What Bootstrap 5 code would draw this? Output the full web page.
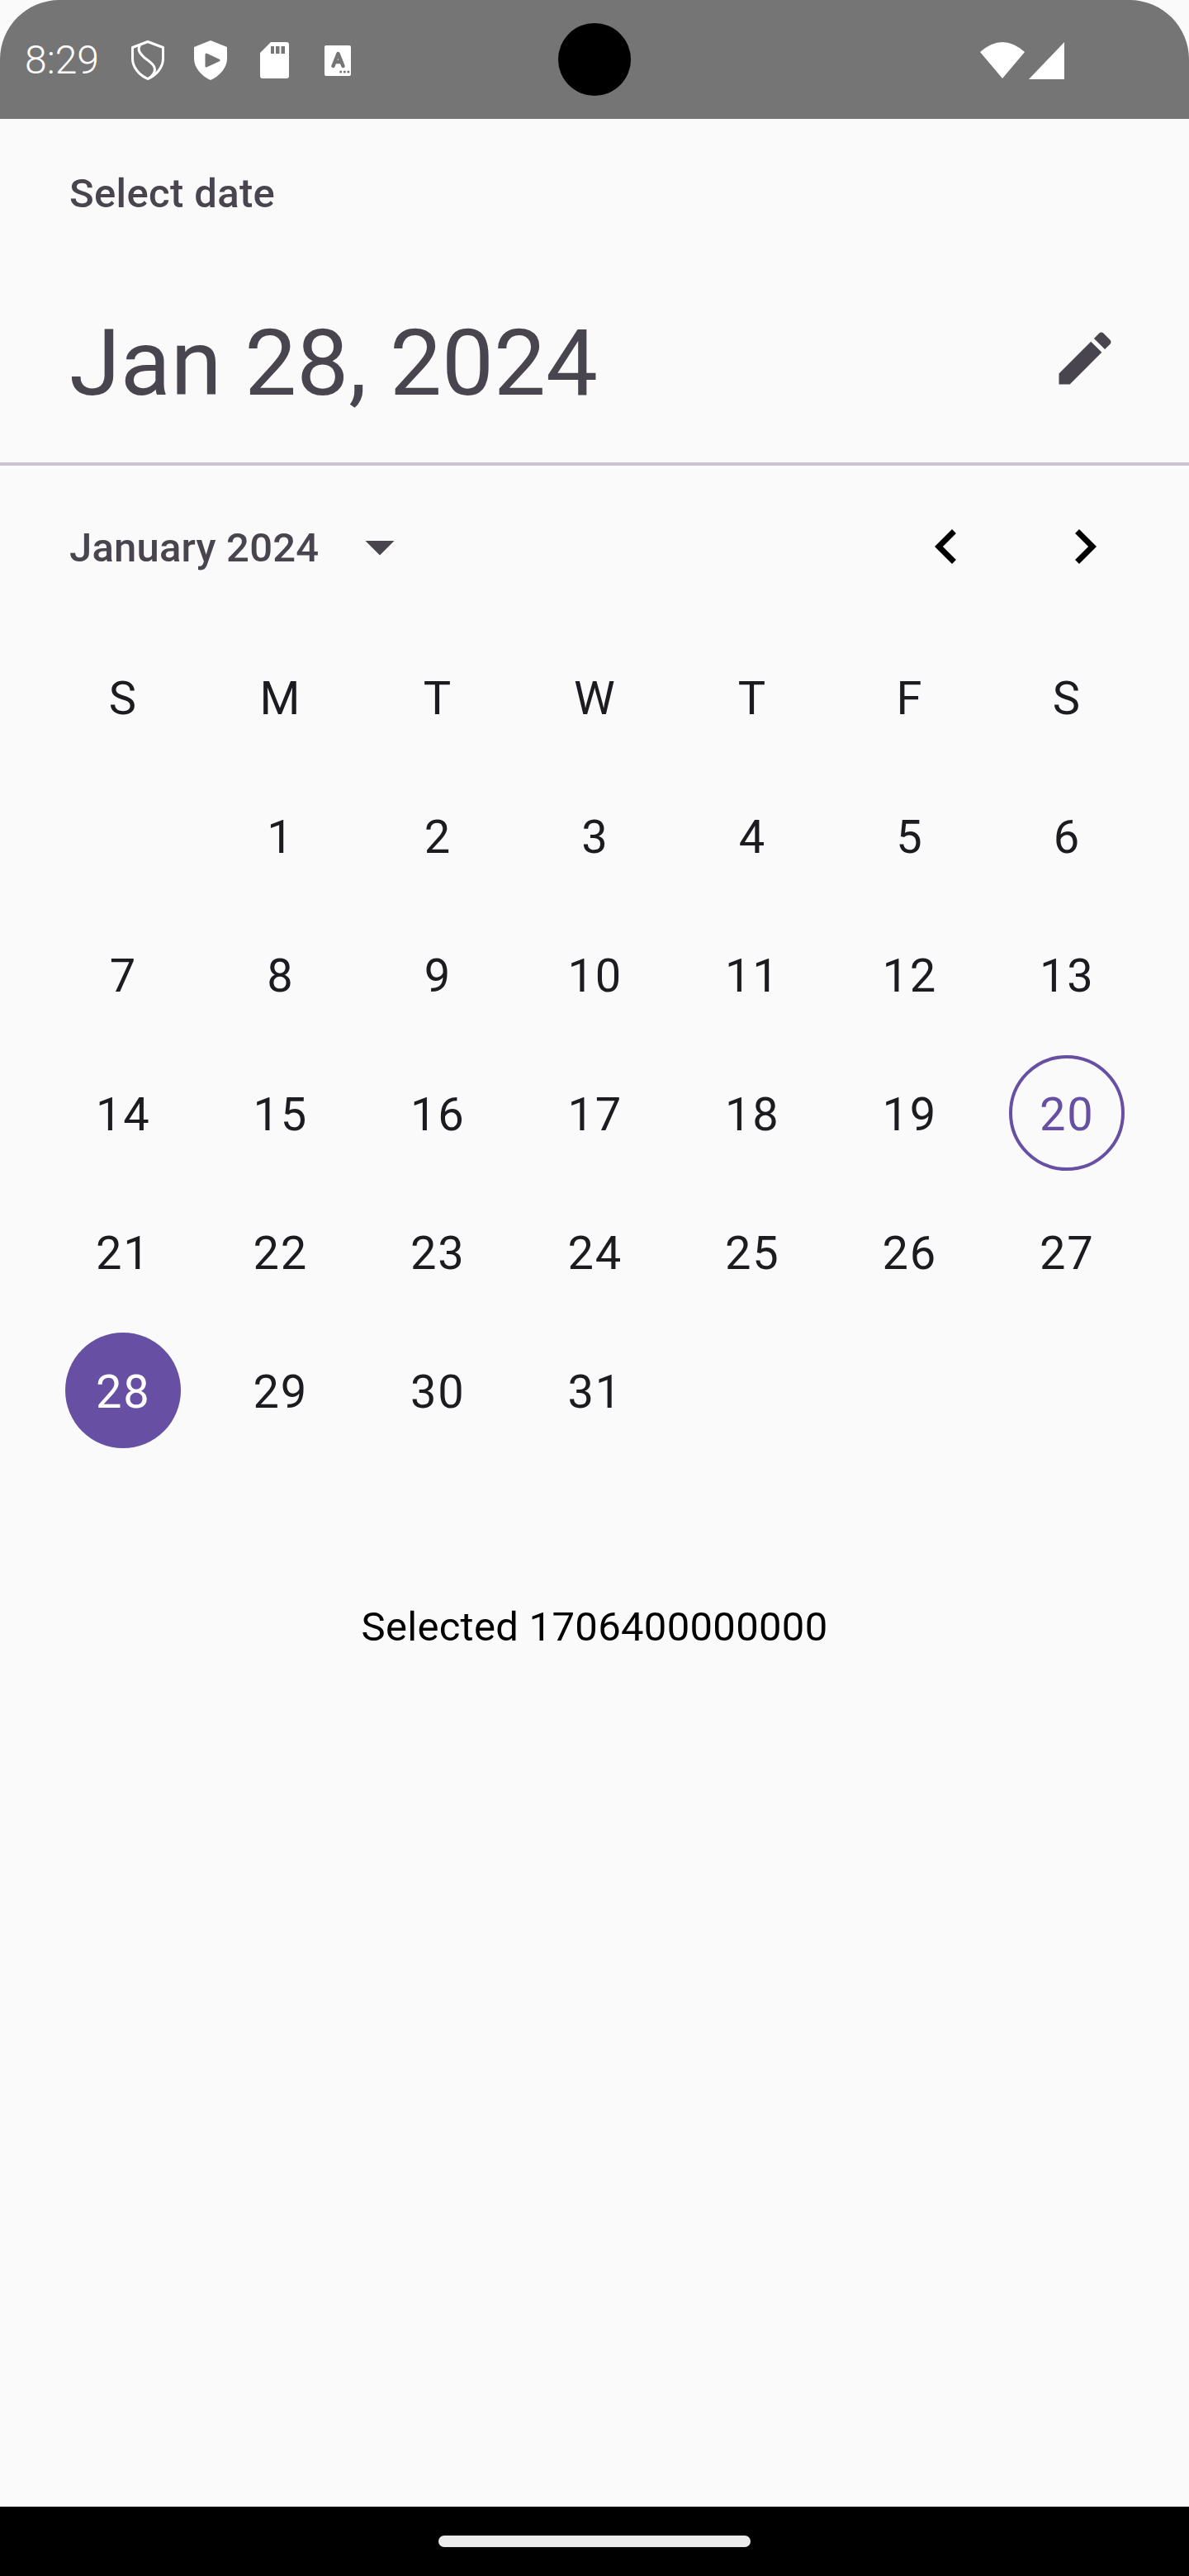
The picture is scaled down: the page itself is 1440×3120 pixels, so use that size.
<!DOCTYPE html>
<html lang="en">
<head>
  <meta charset="UTF-8">
  <title>Select date</title>
  <link rel="stylesheet" href="https://cdn.jsdelivr.net/npm/bootstrap@5.3.0/dist/css/bootstrap.min.css">
  <style>
    body { background: #000; font-family: Roboto, "Liberation Sans", sans-serif; }
    .phone-screen { width: 1440px; height: 3120px; background: #fafafa; }

    /* status bar */
    .status-strip { height: 144px; background: #757575; border-radius: 72px 72px 0 0; color: #fff; padding: 2px 0 0 30px; }
    .status-clock { font-size: 48px; font-weight: 300; line-height: 1; margin-right: 39px; }
    .camera-hole { position: absolute; left: 676px; top: 28px; width: 88px; height: 88px; border-radius: 50%; background: #000; }
    .status-right { margin-left: auto; margin-right: 151px; gap: 5px; }
    .status-icon-2 { margin-left: 36px; }
    .status-icon-3 { margin-left: 40px; }
    .status-icon-4 { margin-left: 43px; }

    /* header */
    .picker-head { padding: 0 0 0 84px; height: 420px; border-bottom: 4px solid #cac4d0; color: #49454f; }
    .picker-label { font-size: 49px; font-weight: 500; line-height: 58px; padding-top: 62px; letter-spacing: .35px; }
    .picker-date { font-size: 112px; line-height: 132px; margin-top: 110px; }
    .edit-btn { width: 84px; height: 84px; margin-right: 84px; margin-top: 248px; fill: #49454f; }

    /* month row */
    .month-row { height: 196px; padding: 0 84px; color: #49454f; }
    .month-name { font-size: 49px; font-weight: 500; letter-spacing: .2px; padding-top: 4px; }
    .arrow-down { margin-left: 32px; }
    .chevron-next { margin-left: 84px; }

    /* calendar */
    .day-grid { display: grid; grid-template-columns: repeat(7, 190.5px); grid-auto-rows: 168px; padding-left: 54px; color: #1c1b1f; font-size: 56px; letter-spacing: 1.75px; }
    .day-cell { display: flex; align-items: center; justify-content: center; padding-top: 4px; }
    .day-chip { width: 140px; height: 140px; border-radius: 50%; display: flex; align-items: center; justify-content: center; margin-top: -4px; padding-top: 4px; }
    .day-today { border: 4px solid #6750a4; color: #6750a4; }
    .day-picked { background: #6750a4; color: #fff; }
    .picked-text { font-size: 49px; color: #000; text-align: center; margin-top: 174px; line-height: 58px; letter-spacing: .3px; }

    /* bottom gesture bar */
    .gesture-bar { height: 84px; background: #000; }
    .gesture-pill { width: 378px; height: 14px; border-radius: 7px; background: #ebebeb; margin-top: 35px; }
  </style>
</head>
<body class="m-0">
  <div class="phone-screen d-flex flex-column position-relative">
    <div class="status-strip d-flex align-items-center flex-shrink-0">
      <span class="status-clock">8:29</span>
      <div class="d-flex align-items-center">
        <svg width="40" height="48" viewBox="0 0 40 48" fill="none" stroke="#fff" stroke-width="3" stroke-linejoin="round" stroke-linecap="round"><path d="M20 1.5 L38.5 8.5 V22 C38.5 33 30 42 20 46.5 C10 42 1.5 33 1.5 22 V8.5 Z"/><path d="M10 7 C7 12 12 17 16 21 C24 27 32 32 27 40 C25 43 23 45 21 46"/></svg>
        <svg class="status-icon-2" width="40" height="48" viewBox="0 0 40 48"><path fill="#fff" d="M20 0 L40 8 V22 C40 33 31 43 20 48 C9 43 0 33 0 22 V8 Z"/><path fill="#757575" stroke="#757575" stroke-width="3" stroke-linejoin="round" d="M15 17 L30 24 L15 31 Z"/></svg>
        <svg class="status-icon-3" width="35" height="44" viewBox="0 0 35 44"><path fill="#fff" fill-rule="evenodd" d="M13 0 H32 Q35 0 35 3 V41 Q35 44 32 44 H3 Q0 44 0 41 V13 Z M13 5 V14 H17 V5 Z M19 5 V14 H23.500 V5 Z M25.500 5 V14 H30 V5 Z"/></svg>
        <svg class="status-icon-4" width="32" height="37" viewBox="0 0 32 37"><rect width="32" height="37" rx="2" fill="#fff"/><path fill="none" stroke="#757575" stroke-width="4.500" stroke-linecap="round" stroke-linejoin="round" d="M10.500 25 L16.500 10 L22.500 25 M12.500 20 H20.500"/><circle cx="19.700" cy="32" r="1.500" fill="#757575"/><circle cx="24.300" cy="32" r="1.500" fill="#757575"/><circle cx="28.900" cy="32" r="1.500" fill="#757575"/></svg>
      </div>
      <div class="camera-hole"></div>
      <div class="status-right d-flex align-items-center">
        <svg width="54" height="44" viewBox="0 0 54 44"><path fill="#fff" d="M27 44 L0 12 Q27 -12 54 12 Z"/></svg>
        <svg width="43" height="45" viewBox="0 0 43 45"><path fill="#fff" d="M43 0 V45 H0 Z"/></svg>
      </div>
    </div>

    <div class="picker-head d-flex justify-content-between flex-shrink-0">
      <div>
        <div class="picker-label">Select date</div>
        <div class="picker-date">Jan 28, 2024</div>
      </div>
      <svg class="edit-btn" viewBox="0 0 24 24"><path d="M3 17.25V21h3.75L17.81 9.94l-3.75-3.75L3 17.25zM20.71 7.04c.39-.39.39-1.02 0-1.41l-2.34-2.34c-.39-.39-1.02-.39-1.41 0l-1.83 1.83 3.75 3.75 1.83-1.83z"/></svg>
    </div>

    <div class="month-row d-flex align-items-center flex-shrink-0">
      <span class="month-name">January 2024</span>
      <svg class="arrow-down" width="84" height="84" viewBox="0 0 24 24"><path fill="#49454f" d="M7 10l5 5 5-5z"/></svg>
      <svg class="ms-auto" width="84" height="84" viewBox="0 0 24 24"><path d="M15.41 7.41L14 6l-6 6 6 6 1.41-1.41L10.83 12z"/></svg>
      <svg class="chevron-next" width="84" height="84" viewBox="0 0 24 24"><path d="M10 6L8.59 7.41 13.17 12l-4.58 4.59L10 18l6-6z"/></svg>
    </div>

    <div class="day-grid">
      <div class="day-cell">S</div><div class="day-cell">M</div><div class="day-cell">T</div><div class="day-cell">W</div><div class="day-cell">T</div><div class="day-cell">F</div><div class="day-cell">S</div>
      <div class="day-cell"></div><div class="day-cell">1</div><div class="day-cell">2</div><div class="day-cell">3</div><div class="day-cell">4</div><div class="day-cell">5</div><div class="day-cell">6</div>
      <div class="day-cell">7</div><div class="day-cell">8</div><div class="day-cell">9</div><div class="day-cell">10</div><div class="day-cell">11</div><div class="day-cell">12</div><div class="day-cell">13</div>
      <div class="day-cell">14</div><div class="day-cell">15</div><div class="day-cell">16</div><div class="day-cell">17</div><div class="day-cell">18</div><div class="day-cell">19</div><div class="day-cell"><span class="day-chip day-today">20</span></div>
      <div class="day-cell">21</div><div class="day-cell">22</div><div class="day-cell">23</div><div class="day-cell">24</div><div class="day-cell">25</div><div class="day-cell">26</div><div class="day-cell">27</div>
      <div class="day-cell"><span class="day-chip day-picked">28</span></div><div class="day-cell">29</div><div class="day-cell">30</div><div class="day-cell">31</div>
    </div>

    <div class="picked-text">Selected 1706400000000</div>

    <div class="gesture-bar mt-auto d-flex justify-content-center flex-shrink-0">
      <div class="gesture-pill"></div>
    </div>
  </div>
  <script src="https://cdn.jsdelivr.net/npm/bootstrap@5.3.0/dist/js/bootstrap.bundle.min.js"></script>
</body>
</html>
